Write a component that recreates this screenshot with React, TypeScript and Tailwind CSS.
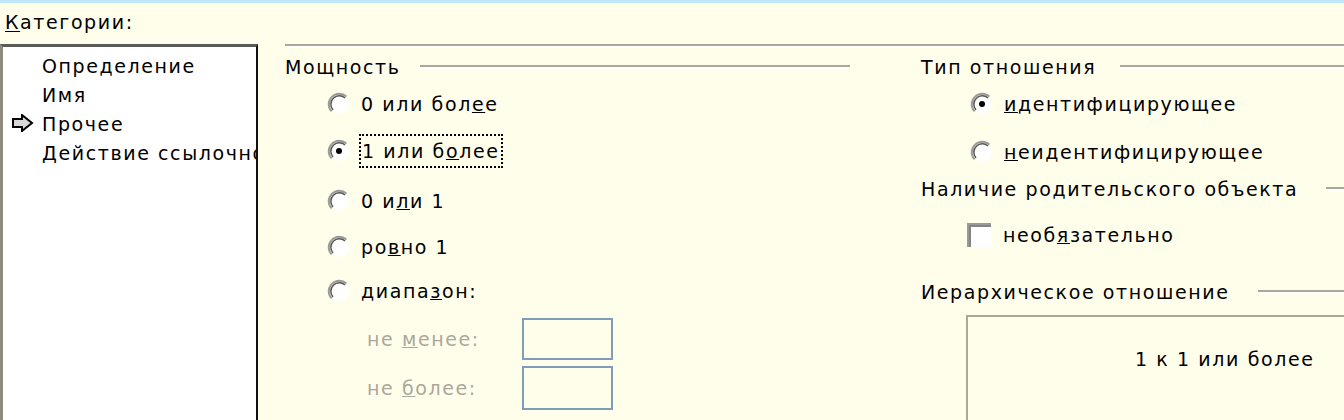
import React from "react"

const ink = "text-[#000]"

function Radio({ checked }: { checked?: boolean }) {
  return (
    <svg width="24" height="24" viewBox="0 0 24 24" className="shrink-0">
      <circle cx="12" cy="12" r="10" fill="#fff" />
      <path d="M4.58 19.42 A10.5 10.5 0 0 1 19.42 4.58" fill="none" stroke="#9a9a98" strokeWidth="2" />
      <path d="M6 18 A8.5 8.5 0 0 1 18 6" fill="none" stroke="#555" strokeWidth="1.5" />
      {checked && <circle cx="12" cy="12" r="3" fill="#000" />}
    </svg>
  )
}

function Checkbox() {
  return (
    <div className="h-[24px] w-[24px] shrink-0 border-l-2 border-t-2 border-[#9a9a98] bg-white">
      <div className="h-full w-full border-l-2 border-t-2 border-[#505050]/70" />
    </div>
  )
}

function GroupHeader({ label, gap = "ml-[24px]", end = "" }: { label: string; gap?: string; end?: string }) {
  return (
    <div className="flex h-[24px] items-center">
      <span className="whitespace-nowrap">{label}</span>
      <div className={`${gap} ${end} h-[4px] flex-1 border-t-2 border-b-2 border-t-[#aca899] border-b-white`} />
    </div>
  )
}

function Option({
  checked,
  children,
  className = "",
  focus,
}: {
  checked?: boolean
  children: React.ReactNode
  className?: string
  focus?: boolean
}) {
  return (
    <div className={`flex h-[28px] items-center ${className}`}>
      <Radio checked={checked} />
      <span
        className={
          focus
            ? "ml-[10px] whitespace-nowrap px-[1px] py-[3px] outline-2 outline-dotted outline-black"
            : "ml-[10px] whitespace-nowrap"
        }
      >
        {children}
      </span>
    </div>
  )
}

function CategoryList() {
  const items = ["Определение", "Имя", "Прочее", "Действие ссылочной целостности"]
  return (
    <div className="h-full w-[258px] shrink-0 overflow-hidden border-l-[3px] border-r-2 border-t-[3px] border-l-[#8e8c7e] border-r-[#111] border-t-[#5a5a58] bg-white pt-[4px]">
      {items.map(item => (
        <div key={item} className="relative flex h-[29px] items-center whitespace-nowrap pl-[39px]">
          {item === "Прочее" && (
            <svg width="22" height="18" viewBox="0 0 22 18" className="absolute left-[9px] top-[5px]">
              <path d="M1 5 H10 V1 L20 9 L10 17 V13 H1 Z" fill="#d8d8d8" stroke="#000" strokeWidth="2" strokeLinejoin="miter" />
            </svg>
          )}
          {item}
        </div>
      ))}
    </div>
  )
}

export default function App() {
  return (
    <div
      className={`h-[420px] w-[1344px] overflow-hidden bg-[#fffeeb] font-['DejaVu_Sans',sans-serif] text-[19px] leading-[24px] tracking-[1.6px] ${ink}`}
    >
      <div className="h-[3px] bg-[#bfe7f8]" />
      <div className="h-[41px] pl-[5px] pt-[7px]">
        <u className="underline-offset-2">К</u>атегории:
      </div>
      <div className="flex h-[376px]">
        <CategoryList />
        <div className="flex-1 pl-[27px]">
          <div className="h-[4px] border-t-2 border-b-2 border-t-[#aca899] border-b-white" />
          <div className="flex">
            {/* Мощность */}
            <div className="w-[636px] shrink-0 pt-[7px]">
              <GroupHeader label="Мощность" gap="ml-[20px]" end="mr-[71px]" />
              <div className="pl-[42px]">
                <Option className="mt-[11px]">
                  0 или бол<u>е</u>е
                </Option>
                <Option className="mt-[19px]" checked focus>
                  1 или б<u>о</u>лее
                </Option>
                <Option className="mt-[22px]">
                  0 и<u>л</u>и 1
                </Option>
                <Option className="mt-[18px]">
                  ро<u>в</u>но 1
                </Option>
                <Option className="mt-[16px]">
                  диапа<u>з</u>он:
                </Option>
                <div className="mt-[13px] flex items-center pl-[40px] text-[#aaa89c]">
                  <span className="w-[155px] whitespace-nowrap">
                    не <u>м</u>енее:
                  </span>
                  <div className="h-[42px] w-[91px] border-2 border-[#7f9db9]" />
                </div>
                <div className="mt-[6px] flex items-center pl-[40px] text-[#aaa89c]">
                  <span className="w-[155px] whitespace-nowrap">
                    не <u>б</u>олее:
                  </span>
                  <div className="h-[44px] w-[91px] border-2 border-[#7f9db9]" />
                </div>
              </div>
            </div>

            {/* Тип отношения */}
            <div className="flex-1 pt-[7px]">
              <GroupHeader label="Тип отношения" />
              <div className="pl-[49px]">
                <Option className="mt-[11px]" checked>
                  <u>и</u>дентифицирующее
                </Option>
                <Option className="mt-[20px]">
                  <u>н</u>еидентифицирующее
                </Option>
              </div>
              <div className="mt-[11px]">
                <GroupHeader label="Наличие родительского объекта" gap="ml-[28px]" />
              </div>
              <div className="mt-[22px] flex h-[24px] items-center pl-[46px]">
                <Checkbox />
                <span className="ml-[12px] whitespace-nowrap">
                  необ<u>я</u>зательно
                </span>
              </div>
              <div className="mt-[33px]">
                <GroupHeader label="Иерархическое отношение" gap="ml-[28px]" />
              </div>
              <div className="ml-[45px] mt-[11px] h-[120px] border-l-2 border-t-2 border-[#aca899] pl-[167px] pt-[30px]">
                <span className="whitespace-nowrap">1 к 1 или более</span>
              </div>
            </div>
          </div>
        </div>
      </div>
    </div>
  )
}
